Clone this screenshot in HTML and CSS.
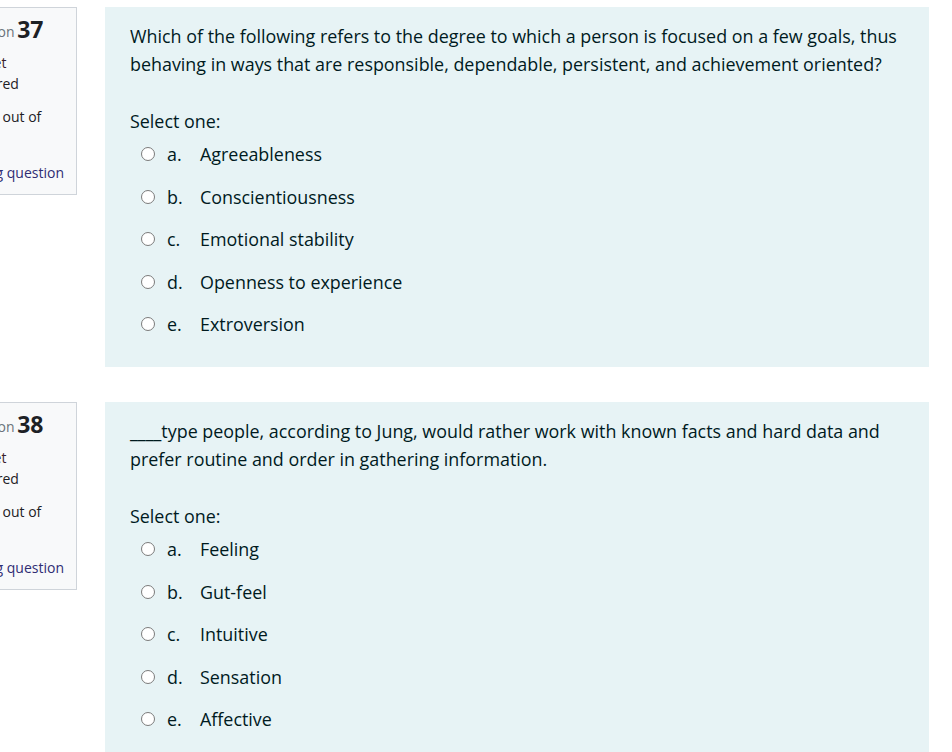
FILE: index.html
```html
<!DOCTYPE html>
<html lang="en">
<head>
<meta charset="utf-8">
<title>Quiz</title>
<link rel="stylesheet" href="styles.css">
</head>
<body>
<div class="page">
  <div class="que">
    <div class="info">
      <h3 class="qhead">Question <span class="qno">37</span></h3>
      <div class="state"><span class="l1">Not yet</span><span class="l2">answered</span></div>
      <div class="grade"><span class="l3">Marked out of</span><span class="l4">1.00</span></div>
      <div class="flag"><span class="flagicon"></span><span class="flaglink">Flag question</span></div>
    </div>
    <div class="content">
      <div class="qtext">Which of the following refers to the degree to which a person is focused on a few goals, thus behaving in ways that are responsible, dependable, persistent, and achievement oriented?</div>
      <div class="prompt">Select one:</div>
      <div class="answers">
        <div class="opt"><span class="radio"></span><span class="letter">a.</span><span class="label">Agreeableness</span></div>
        <div class="opt"><span class="radio"></span><span class="letter">b.</span><span class="label">Conscientiousness</span></div>
        <div class="opt"><span class="radio"></span><span class="letter">c.</span><span class="label">Emotional stability</span></div>
        <div class="opt"><span class="radio"></span><span class="letter">d.</span><span class="label">Openness to experience</span></div>
        <div class="opt"><span class="radio"></span><span class="letter">e.</span><span class="label">Extroversion</span></div>
      </div>
    </div>
  </div>
  <div class="que">
    <div class="info">
      <h3 class="qhead">Question <span class="qno">38</span></h3>
      <div class="state"><span class="l1">Not yet</span><span class="l2">answered</span></div>
      <div class="grade"><span class="l3">Marked out of</span><span class="l4">1.00</span></div>
      <div class="flag"><span class="flagicon"></span><span class="flaglink">Flag question</span></div>
    </div>
    <div class="content">
      <div class="qtext">____type people, according to Jung, would rather work with known facts and hard data and prefer routine and order in gathering information.</div>
      <div class="prompt">Select one:</div>
      <div class="answers">
        <div class="opt"><span class="radio"></span><span class="letter">a.</span><span class="label">Feeling</span></div>
        <div class="opt"><span class="radio"></span><span class="letter">b.</span><span class="label">Gut-feel</span></div>
        <div class="opt"><span class="radio"></span><span class="letter">c.</span><span class="label">Intuitive</span></div>
        <div class="opt"><span class="radio"></span><span class="letter">d.</span><span class="label">Sensation</span></div>
        <div class="opt"><span class="radio"></span><span class="letter">e.</span><span class="label">Affective</span></div>
      </div>
    </div>
  </div>
</div>
</body>
</html>
```

FILE: styles.css
```css
html, body {
  margin: 0;
  padding: 0;
  background: #ffffff;
  overflow: hidden;
}
body {
  font-family: "Open Sans", "Noto Sans", sans-serif;
  color: #1d2125;
}
.page {
  padding-top: 7px;
  display: flex;
  flex-direction: column;
  gap: 35px;
}
.que {
  display: flex;
  align-items: flex-start;
  gap: 28px;
  margin-left: -52px;
}
.info {
  box-sizing: border-box;
  width: 129px;
  height: 188px;
  flex: none;
  background: #f8f9fa;
  border: 1px solid #cfd4da;
  padding: 8px 4px 0 6px;
  font-size: 14px;
  line-height: 21px;
}
.qhead {
  margin: 0 0 7px 0;
  font-size: 14px;
  font-weight: normal;
  color: #6a737b;
  line-height: 26px;
  white-space: nowrap;
}
.qno {
  font-size: 23px;
  font-weight: 700;
  color: #1d2125;
  vertical-align: -1px;
  margin-left: -1px;
}
.state {
  display: flex;
  flex-direction: column;
  margin-bottom: 12px;
  white-space: nowrap;
}
.l1 {
  padding-left: 4px;
  color: #3b1f2b;
}
.l2 {
  padding-left: 0;
}
.grade {
  display: flex;
  flex-direction: column;
  margin-bottom: 14px;
  white-space: nowrap;
}
.l3 {
  margin-left: -6px;
}
.flag {
  display: flex;
  align-items: center;
  gap: 3px;
  white-space: nowrap;
  padding-left: 4px;
}
.flagicon {
  width: 15px;
  height: 12px;
  flex: none;
}
.flaglink {
  color: #2f2d74;
}
.content {
  box-sizing: border-box;
  width: 824px;
  height: 360px;
  flex: none;
  background: #e7f3f5;
  padding: 15px 20px 0 25px;
  color: #001a1e;
  font-size: 17.9px;
  line-height: 28px;
}
.qtext {
  margin-bottom: 29px;
}
.prompt {
  margin-bottom: 5px;
}
.answers {
  display: flex;
  flex-direction: column;
  gap: 14.5px;
  padding-left: 11px;
}
.opt {
  display: flex;
  align-items: center;
  height: 28px;
}
.radio {
  box-sizing: border-box;
  width: 14px;
  height: 14px;
  border: 1px solid #7b7b7b;
  border-radius: 50%;
  background: #ffffff;
  flex: none;
  margin-right: 12px;
}
.letter {
  width: 33px;
  flex: none;
}
```
